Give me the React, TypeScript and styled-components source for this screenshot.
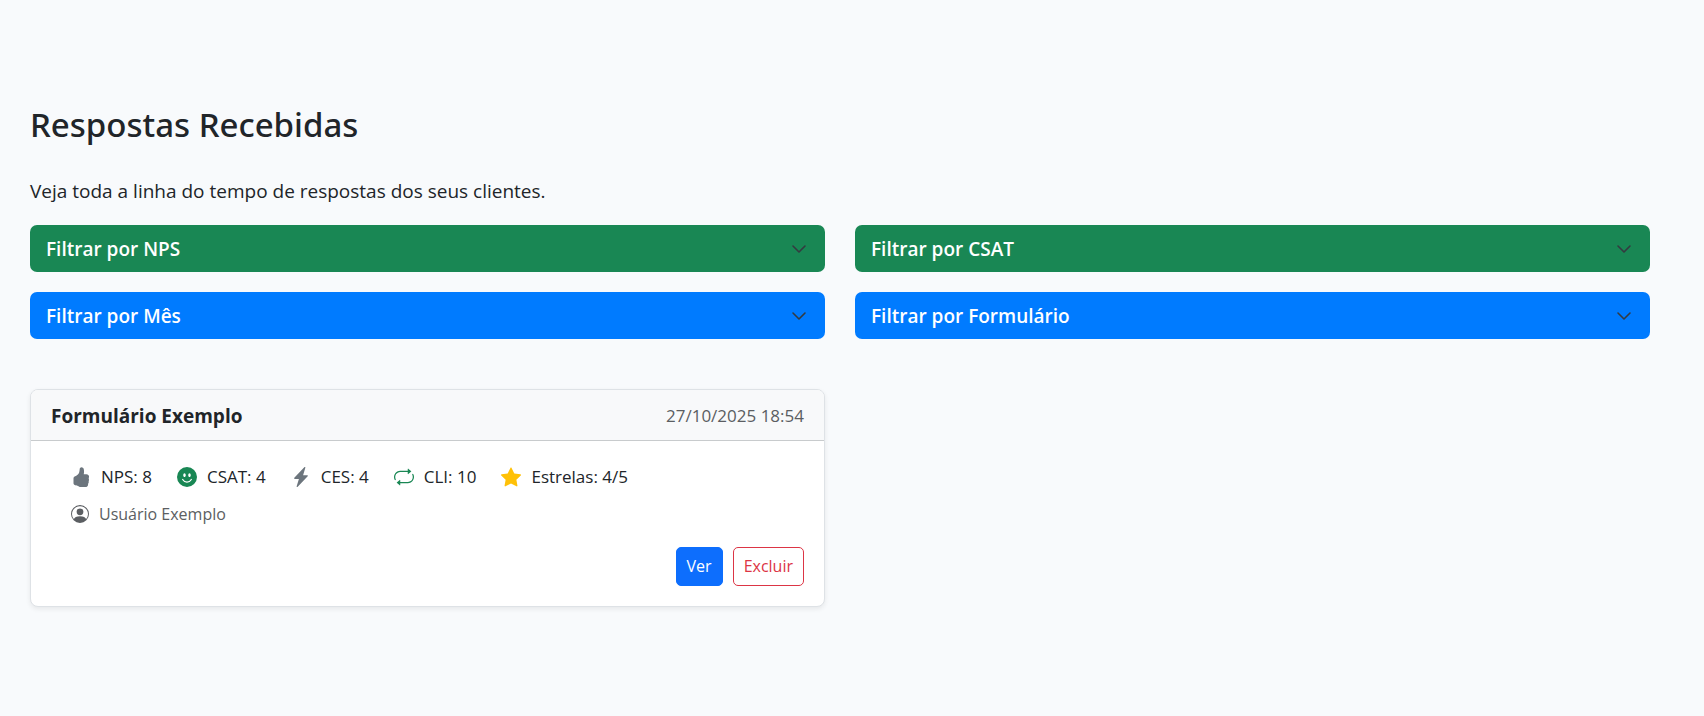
import React, { useState } from 'react';
import styled, { createGlobalStyle } from 'styled-components';
import type { IconType } from 'react-icons';
import {
  BsEmojiSmileFill,
  BsHandThumbsUpFill,
  BsLightningChargeFill,
  BsPersonCircle,
  BsRepeat,
  BsStarFill,
} from 'react-icons/bs';

const GlobalStyle = createGlobalStyle`
  *, *::before, *::after {
    box-sizing: border-box;
  }

  body {
    margin: 0;
    background: #f8fafc;
    color: #212529;
    font-family: 'Segoe UI', 'Open Sans', 'Noto Sans', sans-serif;
    font-size: 19px;
    line-height: 30px;
  }

  button {
    font-family: inherit;
    cursor: pointer;
  }
`;

const Page = styled.main`
  padding: 104px 54px 50px 30px;
`;

const Title = styled.h1`
  margin: 0 0 30px;
  font-family: 'Segoe UI', 'Noto Sans', sans-serif;
  font-size: 33px;
  font-weight: 500;
  line-height: 42px;
`;

const Lead = styled.p`
  margin: 0 0 19px;
`;

const Grid = styled.div`
  display: grid;
  grid-template-columns: repeat(2, minmax(0, 1fr));
  gap: 20px 30px;
`;

const Filters = styled(Grid)`
  margin-bottom: 50px;
`;

const FilterButton = styled.button<{ $color: string }>`
  display: flex;
  align-items: center;
  justify-content: space-between;
  padding: 9px 18px 8px 16px;
  border: 0;
  border-radius: 7px;
  background: ${({ $color }) => $color};
  color: #fff;
  font-size: 19px;
  font-weight: 600;
  line-height: 30px;
  text-align: left;

  svg {
    width: 16px;
    height: 16px;
  }
`;

const Card = styled.article`
  border: 1px solid #dee2e6;
  border-radius: 8px;
  background: #fff;
  box-shadow: 0 2px 5px rgba(0, 0, 0, 0.075);
  overflow: hidden;
`;

const CardHeader = styled.header`
  display: flex;
  align-items: center;
  justify-content: space-between;
  padding: 11px 20px 9px;
  border-bottom: 1px solid #c8cbcd;
  background: #f8f9fa;
`;

const CardTitle = styled.h2`
  margin: 0;
  font-size: 19px;
  font-weight: 700;
  line-height: 30px;
`;

const Stamp = styled.time`
  color: #5b5e62;
  font-size: 17px;
`;

const CardBody = styled.div`
  padding: 20px;
`;

const Metrics = styled.ul`
  display: flex;
  flex-wrap: wrap;
  gap: 10px 25px;
  margin: 0 0 8px;
  padding: 0 0 0 20px;
  list-style: none;
  font-size: 17px;
  line-height: 32px;
`;

const Metric = styled.li<{ $color: string }>`
  display: flex;
  align-items: center;
  gap: 10px;

  svg {
    width: 20px;
    height: 20px;
    color: ${({ $color }) => $color};
  }
`;

const Author = styled.div`
  display: flex;
  align-items: center;
  gap: 10px;
  padding-left: 20px;
  color: #5b5e62;
  font-size: 16px;
  line-height: 26px;

  svg {
    width: 18px;
    height: 18px;
  }
`;

const Actions = styled.div`
  display: flex;
  justify-content: flex-end;
  gap: 10px;
  margin-top: 20px;
`;

const ActionButton = styled.button<{ $danger?: boolean }>`
  padding: 5px 10px;
  border: 1px solid ${({ $danger }) => ($danger ? '#dc3545' : '#0d6efd')};
  border-radius: 5px;
  background: ${({ $danger }) => ($danger ? '#fff' : '#0d6efd')};
  color: ${({ $danger }) => ($danger ? '#dc3545' : '#fff')};
  font-size: 16px;
  line-height: 27px;
`;

const Chevron = () => (
  <svg
    viewBox="0 0 16 16"
    fill="none"
    stroke="#343a40"
    strokeWidth="1.6"
    strokeLinecap="round"
    strokeLinejoin="round"
    aria-hidden
  >
    <path d="m2 5 6 6 6-6" />
  </svg>
);

const filters = [
  { label: 'Filtrar por NPS', color: '#198754' },
  { label: 'Filtrar por CSAT', color: '#198754' },
  { label: 'Filtrar por Mês', color: '#007bff' },
  { label: 'Filtrar por Formulário', color: '#007bff' },
];

const metrics: { label: string; color: string; Icon: IconType }[] = [
  { label: 'NPS: 8', color: '#6c757d', Icon: BsHandThumbsUpFill },
  { label: 'CSAT: 4', color: '#198754', Icon: BsEmojiSmileFill },
  { label: 'CES: 4', color: '#6c757d', Icon: BsLightningChargeFill },
  { label: 'CLI: 10', color: '#198754', Icon: BsRepeat },
  { label: 'Estrelas: 4/5', color: '#ffc107', Icon: BsStarFill },
];

export default function App() {
  const [open, setOpen] = useState<string | null>(null);

  return (
    <>
      <GlobalStyle />
      <Page>
        <Title>Respostas Recebidas</Title>
        <Lead>Veja toda a linha do tempo de respostas dos seus clientes.</Lead>
        <Filters>
          {filters.map(({ label, color }) => (
            <FilterButton
              key={label}
              type="button"
              $color={color}
              aria-expanded={open === label}
              onClick={() => setOpen(open === label ? null : label)}
            >
              {label}
              <Chevron />
            </FilterButton>
          ))}
        </Filters>
        <Grid>
          <Card>
            <CardHeader>
              <CardTitle>Formulário Exemplo</CardTitle>
              <Stamp dateTime="2025-10-27T18:54">27/10/2025 18:54</Stamp>
            </CardHeader>
            <CardBody>
              <Metrics>
                {metrics.map(({ label, color, Icon }) => (
                  <Metric key={label} $color={color}>
                    <Icon aria-hidden />
                    {label}
                  </Metric>
                ))}
              </Metrics>
              <Author>
                <BsPersonCircle aria-hidden />
                Usuário Exemplo
              </Author>
              <Actions>
                <ActionButton type="button">Ver</ActionButton>
                <ActionButton type="button" $danger>
                  Excluir
                </ActionButton>
              </Actions>
            </CardBody>
          </Card>
        </Grid>
      </Page>
    </>
  );
}
